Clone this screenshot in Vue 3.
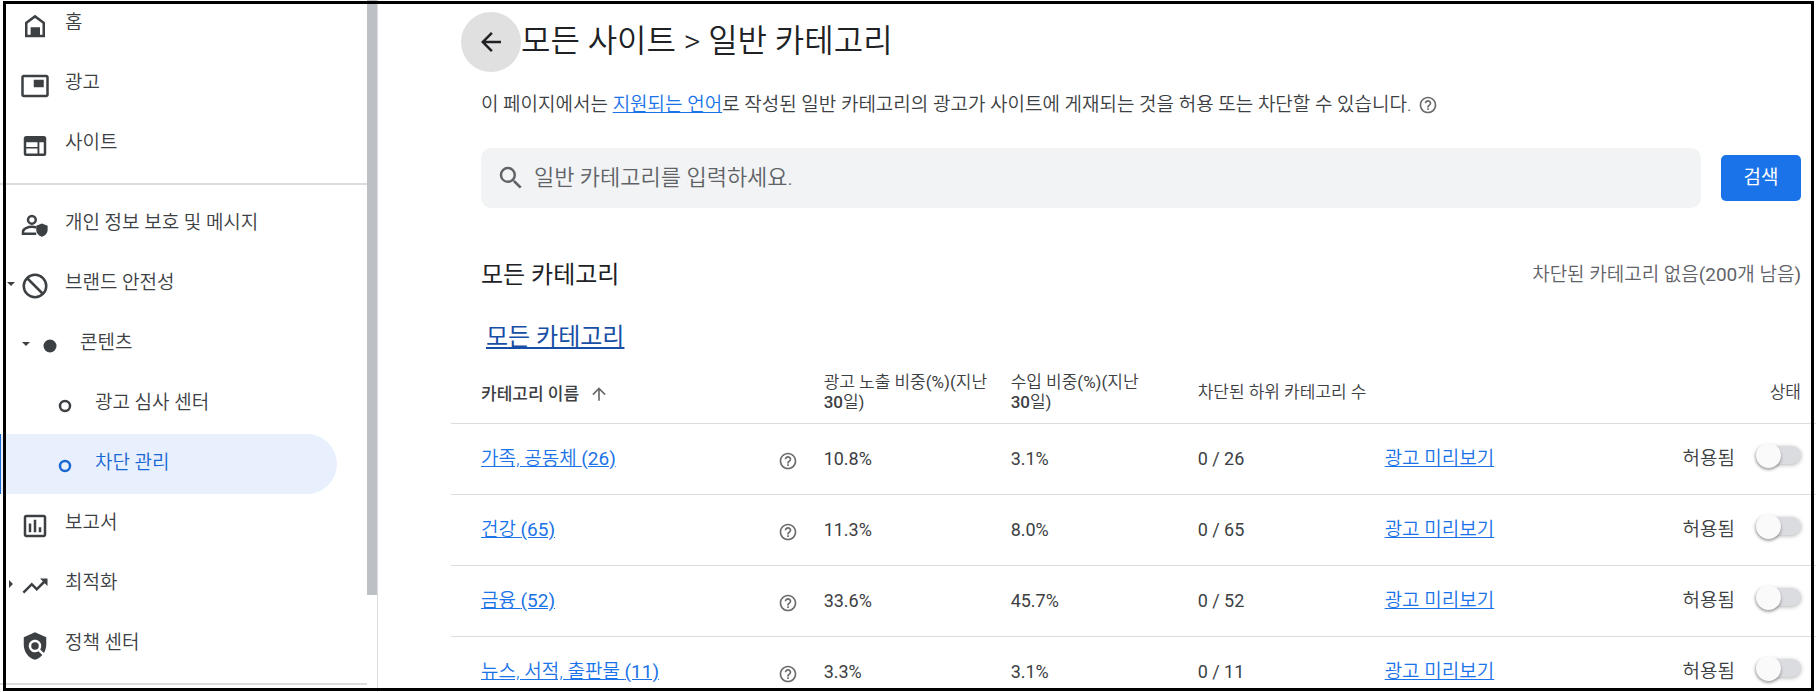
<template>
  <div class="page">
    <aside class="sidebar">
      <nav class="menu">
        <template v-for="(group, g) in menuGroups" :key="g">
          <a
            v-for="item in group"
            :key="item.label"
            href="#"
            class="menu-item"
            :class="[`level-${item.level}`, { active: item.active }]"
            @click.prevent
          >
            <span class="caret" :class="item.caret"></span>
            <svg class="icon" viewBox="0 0 24 24" aria-hidden="true">
              <circle v-if="item.icon === 'dot'" cx="12" cy="12" r="5.2" />
              <circle v-else-if="item.icon === 'ring'" cx="12" cy="12" r="4" class="stroke" />
              <g v-else-if="item.icon === 'block'" class="stroke">
                <circle cx="12" cy="12" r="9" />
                <path d="M5.6 5.6l12.8 12.8" />
              </g>
              <g v-else-if="item.icon === 'privacy'">
                <circle cx="9.5" cy="7" r="3.1" class="stroke" />
                <path class="stroke" d="M13 18.2H2.4v-1.7c0-2.4 4-3.9 7.2-3.9 1.2 0 2.3.2 3.4.5" />
                <path d="M17.5 9.9l4.6 1.8v3.3c0 2.6-1.9 4.8-4.6 5.6-2.6-.8-4.5-3-4.5-5.6v-3.3z" />
              </g>
              <path v-else fill-rule="evenodd" :d="icons[item.icon]" />
            </svg>
            <span class="label">{{ item.label }}</span>
          </a>
          <hr />
        </template>
      </nav>
      <div class="scrollbar"><div class="thumb"></div></div>
    </aside>

    <main class="content">
      <header class="title-bar">
        <button class="back" type="button" aria-label="뒤로">
          <svg class="icon" viewBox="0 0 24 24"><path :d="icons.back" /></svg>
        </button>
        <h1>모든 사이트 &gt; 일반 카테고리</h1>
      </header>

      <p class="description">
        <span>이 페이지에서는 <a href="#">지원되는 언어</a>로 작성된 일반 카테고리의 광고가 사이트에 게재되는 것을 허용 또는 차단할 수 있습니다.</span>
        <svg class="small-icon" viewBox="0 0 24 24"><path :d="icons.help" /></svg>
      </p>

      <form class="search" @submit.prevent>
        <label class="search-box">
          <svg class="icon" viewBox="0 0 24 24"><path :d="icons.search" /></svg>
          <input v-model="query" type="text" placeholder="일반 카테고리를 입력하세요." aria-label="일반 카테고리 검색" />
        </label>
        <button class="search-button" type="submit">검색</button>
      </form>

      <div class="section-head">
        <h2>모든 카테고리</h2>
        <span class="remaining">차단된 카테고리 없음<span class="regular">(200</span>개 남음<span class="regular">)</span></span>
      </div>

      <div class="breadcrumb"><a href="#">모든 카테고리</a></div>

      <table>
        <thead>
          <tr>
            <th class="name">
              <div class="sort">카테고리 이름 <svg class="small-icon" viewBox="0 0 24 24"><path :d="icons.up" /></svg></div>
            </th>
            <th v-for="label in ['광고 노출 비중', '수입 비중']" :key="label" class="metric">
              {{ label }}<span class="regular">(%)(</span>지난 <span class="medium">30</span>일<span class="regular">)</span>
            </th>
            <th class="metric blocked">차단된 하위 카테고리 수</th>
            <th class="preview"></th>
            <th class="status">상태</th>
          </tr>
        </thead>
        <tbody>
          <tr v-for="row in rows" :key="row.name">
            <td class="name">
              <div class="name-cell">
                <a href="#">{{ row.name }} <span class="regular">({{ row.count }})</span></a>
                <svg class="small-icon" viewBox="0 0 24 24"><path :d="icons.help" /></svg>
              </div>
            </td>
            <td class="number">{{ row.impressions }}</td>
            <td class="number">{{ row.revenue }}</td>
            <td class="number">0 / {{ row.count }}</td>
            <td><a href="#">광고 미리보기</a></td>
            <td class="status">
              <label class="toggle">
                <span>허용됨</span>
                <input v-model="row.blocked" type="checkbox" role="switch" />
              </label>
            </td>
          </tr>
        </tbody>
      </table>
    </main>
  </div>
</template>

<script setup>
import { ref } from 'vue'

const query = ref('')

const menuGroups = [
  [
    { label: '홈', icon: 'home', level: 1 },
    { label: '광고', icon: 'ads', level: 1 },
    { label: '사이트', icon: 'site', level: 1 },
  ],
  [
    { label: '개인 정보 보호 및 메시지', icon: 'privacy', level: 1 },
    { label: '브랜드 안전성', icon: 'block', level: 1, caret: 'open' },
    { label: '콘텐츠', icon: 'dot', level: 2, caret: 'open' },
    { label: '광고 심사 센터', icon: 'ring', level: 3 },
    { label: '차단 관리', icon: 'ring', level: 3, active: true },
    { label: '보고서', icon: 'report', level: 1 },
    { label: '최적화', icon: 'trend', level: 1, caret: 'closed' },
    { label: '정책 센터', icon: 'policy', level: 1 },
  ],
]

const rows = ref([
  { name: '가족, 공동체', count: 26, impressions: '10.8%', revenue: '3.1%', blocked: false },
  { name: '건강', count: 65, impressions: '11.3%', revenue: '8.0%', blocked: false },
  { name: '금융', count: 52, impressions: '33.6%', revenue: '45.7%', blocked: false },
  { name: '뉴스, 서적, 출판물', count: 11, impressions: '3.3%', revenue: '3.1%', blocked: false },
])

const icons = {
  home: 'M12 3L4 9v12h16V9zM6 19v-9l6-4.5 6 4.5v9h-2v-6H8.5v6z',
  ads: 'M19 7h-8v6h8V7zm2-4H3c-1.1 0-2 .9-2 2v14c0 1.1.9 1.98 2 1.98h18c1.1 0 2-.88 2-1.98V5c0-1.1-.9-2-2-2zm0 16.01H3V4.98h18v14.03z',
  site: 'M5 4h14a2 2 0 0 1 2 2v12a2 2 0 0 1-2 2H5a2 2 0 0 1-2-2V6a2 2 0 0 1 2-2zM5 9v3.8h9V9zM5 14v4h9v-4zM15.5 9v9H19V9z',
  report: 'M19 3H5c-1.1 0-2 .9-2 2v14c0 1.1.9 2 2 2h14c1.1 0 2-.9 2-2V5c0-1.1-.9-2-2-2zm0 16H5V5h14v14zM7 10h2v7H7zm4-3h2v10h-2zm4 6h2v4h-2z',
  trend: 'M16 6l2.29 2.29-4.88 4.88-4-4L2 16.59 3.41 18l6-6 4 4 6.3-6.29L22 12V6z',
  policy: 'M21 5l-9-4-9 4v6c0 5.55 3.84 10.74 9 12 2.3-.56 4.33-1.9 5.88-3.71l-3.12-3.12c-1.94 1.29-4.58 1.07-6.29-.64-1.95-1.95-1.95-5.12 0-7.07 1.95-1.95 5.12-1.95 7.07 0 1.71 1.71 1.92 4.35.64 6.29l2.9 2.9C20.29 15.69 21 13.38 21 11zM12 9a3 3 0 1 0 0 6 3 3 0 0 0 0-6z',
  back: 'M20 11H7.83l5.59-5.59L12 4l-8 8 8 8 1.41-1.41L7.83 13H20v-2z',
  search: 'M15.5 14h-.79l-.28-.27A6.47 6.47 0 0 0 16 9.5 6.5 6.5 0 1 0 9.5 16c1.61 0 3.09-.59 4.23-1.57l.27.28v.79l5 4.99L20.49 19l-4.99-5zm-6 0C7.01 14 5 11.99 5 9.5S7.01 5 9.5 5 14 7.01 14 9.5 11.99 14 9.5 14z',
  help: 'M11 18h2v-2h-2v2zm1-16C6.48 2 2 6.48 2 12s4.48 10 10 10 10-4.48 10-10S17.52 2 12 2zm0 18c-4.41 0-8-3.59-8-8s3.59-8 8-8 8 3.59 8 8-3.59 8-8 8zm0-14c-2.21 0-4 1.79-4 4h2c0-1.1.9-2 2-2s2 .9 2 2c0 2-3 1.75-3 5h2c0-2.25 3-2.5 3-5 0-2.21-1.79-4-4-4z',
  up: 'M4 12l1.41 1.41L11 7.83V20h2V7.83l5.58 5.59L20 12l-8-8-8 8z',
}
</script>

<style>
body {
  margin: 0;
  background: #ffffff;
}
</style>

<style scoped>
.page {
  position: relative;
  display: flex;
  height: 100vh;
  overflow: hidden;
  font-family: Roboto, "Noto Sans CJK KR", sans-serif;
  font-size: 19px;
  font-weight: 350;
  line-height: 24px;
  color: #3c4043;
  word-break: keep-all;
}

/* black outline drawn over the whole page */
.page::after {
  content: "";
  position: absolute;
  inset: 1px 2px 1px 3px;
  border: 3px solid #000000;
  pointer-events: none;
}

a {
  color: #1a73e8;
}

button,
input {
  font: inherit;
}

.regular {
  font-weight: 400;
}

.medium {
  font-weight: 500;
}

.icon {
  width: 30px;
  height: 30px;
  flex: none;
  fill: currentColor;
}

.small-icon {
  width: 20px;
  height: 20px;
  flex: none;
  fill: #6b6b6b;
}

.stroke {
  fill: none;
  stroke: currentColor;
  stroke-width: 2;
}

/* sidebar */
.sidebar {
  display: flex;
  flex: none;
  width: 377px;
  border-right: 1px solid #dadce0;
}

.menu {
  flex: 1;
  margin-top: -6px;
}

.menu-item {
  display: flex;
  align-items: center;
  box-sizing: border-box;
  height: 60px;
  margin-right: 30px;
  border-left: 1px solid transparent;
  border-radius: 0 30px 30px 0;
  color: #3c4043;
  text-decoration: none;
}

.menu-item.active {
  background: #e8f0fe;
  border-left-color: #1967d2;
  color: #1967d2;
}

.menu-item .icon {
  padding-top: 3px;
}

.menu-item .label {
  margin-left: 15px;
  padding-bottom: 2px;
}

.level-2 {
  padding-left: 15px;
}

.level-3 {
  padding-left: 30px;
}

.caret {
  display: flex;
  justify-content: center;
  width: 19px;
}

.caret.open::before {
  content: "";
  border: 4px solid transparent;
  border-top-color: #3c4043;
  border-bottom: 0;
}

.caret.closed::before {
  content: "";
  border: 4px solid transparent;
  border-left-color: #3c4043;
  border-right: 0;
}

.menu hr {
  height: 2px;
  margin: 9px 0;
  border: 0;
  background: #dadce0;
}

.scrollbar {
  width: 10px;
}

.thumb {
  height: 86%;
  background: #bdc1c6;
}

/* main column */
.content {
  flex: 1;
  min-width: 0;
  padding: 12px 0 0 73px;
}

.title-bar {
  display: flex;
  align-items: center;
  padding-left: 10px;
}

.back {
  display: flex;
  align-items: center;
  justify-content: center;
  width: 60px;
  height: 60px;
  padding: 0;
  border: 0;
  border-radius: 50%;
  background: #e0e0e0;
  color: #202124;
}

h1,
h2 {
  margin: 0;
  color: #202124;
}

h1 {
  padding-bottom: 2px;
  font-size: 32px;
  font-weight: 350;
  line-height: 40px;
}

.description {
  display: flex;
  align-items: center;
  gap: 6px;
  margin: 21px 15px 0 30px;
}

.search {
  display: flex;
  align-items: center;
  gap: 20px;
  margin: 31px 15px 0 30px;
}

.search-box {
  display: flex;
  flex: 1;
  align-items: center;
  gap: 8px;
  height: 60px;
  padding: 0 15px;
  border-radius: 10px;
  background: #f1f3f4;
  color: #5f6368;
}

.search-box input {
  flex: 1;
  min-width: 0;
  padding: 0;
  border: 0;
  outline: 0;
  background: transparent;
  color: #3c4043;
  font-size: 22px;
}

.search-box input::placeholder {
  color: #5f6368;
}

.search-button {
  width: 80px;
  height: 46px;
  padding: 0;
  border: 0;
  border-radius: 5px;
  background: #1a73e8;
  color: #ffffff;
  font-weight: 400;
}

.section-head {
  display: flex;
  align-items: center;
  justify-content: space-between;
  margin: 51px 15px 0 30px;
}

h2 {
  font-size: 24px;
  font-weight: 400;
  line-height: 32px;
}

.remaining {
  color: #5f6368;
}

.breadcrumb {
  padding: 30px 0 0 35px;
  font-size: 24px;
  font-weight: 400;
  line-height: 32px;
}

.breadcrumb a {
  color: #174ea6;
}

/* category table */
table {
  width: 100%;
  table-layout: fixed;
  border-spacing: 0;
}

th,
td {
  padding: 0;
  border-bottom: 1px solid #dadce0;
  text-align: left;
}

th {
  height: 62px;
  padding: 8px 20px 0 0;
  font-size: 17px;
  font-weight: 350;
  line-height: 20px;
}

td {
  height: 70px;
}

.name {
  width: 27.3%;
}

th.name {
  padding-left: 30px;
  font-weight: 500;
  box-sizing: border-box;
}

.metric {
  width: 13.7%;
  box-sizing: border-box;
}

th.blocked {
  padding-right: 0;
}

.preview {
  width: 13.7%;
  box-sizing: border-box;
}

.sort {
  display: flex;
  align-items: center;
  gap: 10px;
  padding-top: 3px;
}

.name-cell {
  display: flex;
  align-items: center;
  justify-content: space-between;
  padding: 0 26px 0 30px;
}

.name-cell .small-icon {
  padding-top: 4px;
}

.number {
  font-size: 18px;
  font-weight: 400;
}

th.status,
td.status {
  padding-right: 15px;
  text-align: right;
}

.toggle {
  display: inline-flex;
  align-items: center;
  gap: 21px;
}

.toggle input {
  display: flex;
  align-items: center;
  appearance: none;
  width: 45px;
  height: 18px;
  margin: 0 0 8px;
  border-radius: 9px;
  background: #dadce0;
  box-shadow: 0 1px 4px rgba(0, 0, 0, 0.3);
}

.toggle input::before {
  content: "";
  width: 25px;
  height: 25px;
  border-radius: 50%;
  background: #fafafa;
  box-shadow: 0 2px 3px rgba(0, 0, 0, 0.35);
}

.toggle input:checked {
  justify-content: flex-end;
  background: #8ab4f8;
}
</style>
